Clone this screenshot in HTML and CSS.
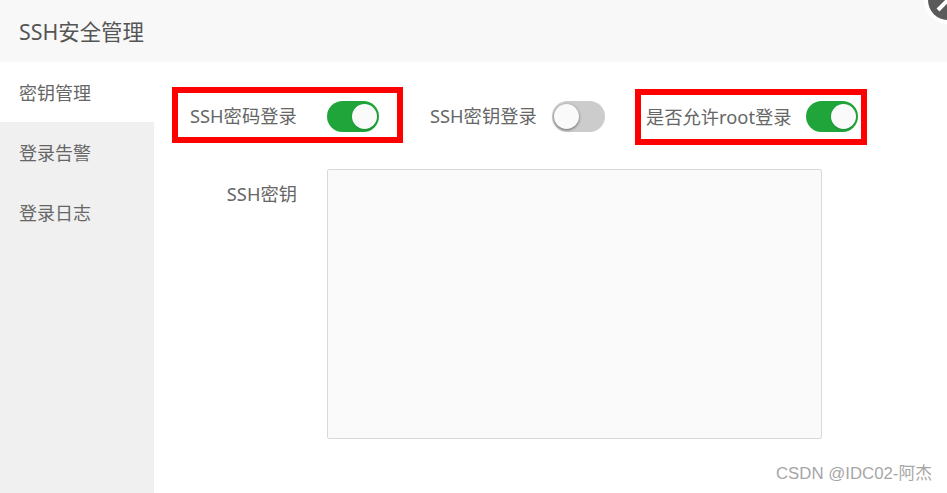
FILE: index.html
```html
<!DOCTYPE html>
<html lang="zh-CN">
<head>
    <meta charset="UTF-8">
    <title>SSH安全管理</title>
    <link rel="stylesheet" href="styles.css">
</head>
<body>
    <div class="dialog">
        <div class="header">SSH安全管理</div>
        <div class="close">
            <svg width="40" height="40" viewBox="0 0 40 40">
                <path d="M10 30 L20 20" stroke="#fff" stroke-width="4" fill="none"/>
            </svg>
        </div>
        <div class="content">
            <div class="side">
                <div class="side-item active">密钥管理</div>
                <div class="side-item">登录告警</div>
                <div class="side-item">登录日志</div>
            </div>
            <div class="main">
                <div class="switch-row">
                    <div class="switch-item marked first">
                        <span class="switch-label">SSH密码登录</span>
                        <span class="toggle on"></span>
                    </div>
                    <div class="switch-item second">
                        <span class="switch-label">SSH密钥登录</span>
                        <span class="toggle"></span>
                    </div>
                    <div class="switch-item marked third">
                        <span class="switch-label">是否允许root登录</span>
                        <span class="toggle on"></span>
                    </div>
                </div>
                <div class="key-row">
                    <label class="key-label">SSH密钥</label>
                    <div class="key-box"></div>
                </div>
            </div>
        </div>
        <div class="mark">CSDN @IDC02-阿杰</div>
    </div>
</body>
</html>
```

FILE: styles.css
```css
body {
    margin: 0;
    padding: 0;
    background-color: #fff;
    font-family: "Noto Sans", "Noto Sans CJK SC", sans-serif;
    color: #666;
}

.dialog {
    position: relative;
    width: 947px;
    height: 493px;
    overflow: hidden;
}

.header {
    height: 62px;
    line-height: 64px;
    padding-left: 19px;
    box-sizing: border-box;
    background-color: #f8f8f8;
    font-size: 21.4px;
    color: #555;
}

.close {
    position: absolute;
    left: 924px;
    top: -24px;
    width: 48px;
    height: 48px;
    padding: 4px;
    box-sizing: border-box;
}

.close svg {
    display: block;
    border-radius: 50%;
    background-color: #5a5a5a;
    box-shadow: 0 0 0 4px #fff;
}

.content {
    display: flex;
    height: 431px;
}

.side {
    width: 154px;
    background-color: #f0f0f0;
}

.side-item {
    height: 60px;
    line-height: 62px;
    padding-left: 19px;
    font-size: 18px;
}

.side-item.active {
    background-color: #fff;
}

.main {
    flex: 1;
    padding: 25px 0 0 18px;
}

.switch-row {
    display: flex;
    align-items: flex-start;
}

.switch-item {
    display: flex;
    align-items: center;
    justify-content: space-between;
    box-sizing: border-box;
    height: 56px;
    font-size: 18.3px;
}

.marked {
    border: 6px solid #f00;
}

.first {
    width: 231px;
    padding: 2px 18px 0 12px;
}

.second {
    width: 175px;
    margin-left: 27px;
    padding-top: 2px;
}

.third {
    width: 232px;
    margin-left: 30px;
    margin-top: 2px;
    padding: 0 3px 0 5px;
}

.third .toggle {
    margin-top: -2px;
}

.switch-label {
    line-height: 1;
}

.toggle {
    position: relative;
    display: block;
    width: 52px;
    height: 31px;
    border-radius: 16px;
    background-color: #ccc;
}

.second .toggle {
    width: 53px;
}

.toggle::after {
    content: "";
    position: absolute;
    left: 2px;
    top: 3px;
    width: 25px;
    height: 25px;
    border-radius: 50%;
    background-color: #fafafa;
    box-shadow: 0 1px 3px rgba(0, 0, 0, 0.5);
}

.toggle.on {
    background-color: #20a53a;
}

.toggle.on::after {
    left: 25px;
    box-shadow: 0 1px 2px rgba(0, 0, 0, 0.15);
}

.key-row {
    display: flex;
    gap: 30px;
    margin-top: 24px;
}

.key-label {
    width: 125px;
    text-align: right;
    font-size: 18.3px;
    line-height: 50px;
}

.key-box {
    width: 495px;
    height: 270px;
    box-sizing: border-box;
    background-color: #fafafa;
    border: 1px solid #d9d9d9;
    border-radius: 2px;
}

.mark {
    position: absolute;
    left: 776px;
    top: 464px;
    font-family: "Liberation Sans", "Noto Sans CJK SC", sans-serif;
    font-size: 16.8px;
    line-height: 20px;
    color: #a6a6a6;
}
```
